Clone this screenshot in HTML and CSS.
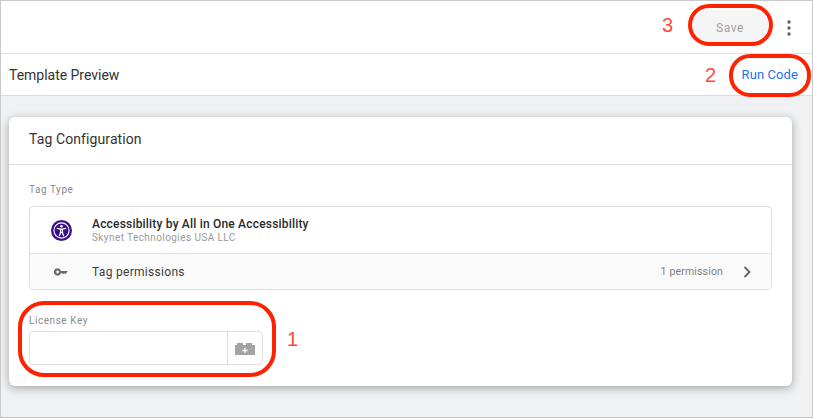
FILE: index.html
```html
<!DOCTYPE html>
<html lang="en">
<head>
<meta charset="utf-8">
<title>Template Preview</title>
<link rel="stylesheet" href="styles.css">
</head>
<body>
<div class="frame">
  <header class="topbar">
    <button class="save">Save</button>
    <svg class="more" width="4" height="16" viewBox="0 0 4 16"><circle cx="2" cy="2" r="1.7"/><circle cx="2" cy="8" r="1.7"/><circle cx="2" cy="14" r="1.7"/></svg>
  </header>
  <div class="subbar">
    <span class="subtitle">Template Preview</span>
    <a class="run">Run Code</a>
  </div>
  <main class="content">
    <section class="card">
      <h2 class="card-title">Tag Configuration</h2>
      <div class="card-body">
        <div class="label">Tag Type</div>
        <div class="tagbox">
          <div class="tagrow">
            <div class="icon-col">
              <svg width="21" height="21" viewBox="0 0 21 21">
                <circle cx="10.5" cy="10.5" r="10.5" fill="#3b0f87"/>
                <circle cx="10.5" cy="10.5" r="7.6" fill="none" stroke="#fff" stroke-width="1.1"/>
                <circle cx="10.5" cy="6.3" r="1.3" fill="#fff"/>
                <path d="M6.3 8.3l3.2.8h2l3.2-.8M9.6 9v3.2l-1.2 3.6M11.4 9v3.2l1.2 3.6M9.6 9.2h1.8v3.4H9.6z" fill="none" stroke="#fff" stroke-width="1.2" stroke-linecap="round" stroke-linejoin="round"/>
              </svg>
            </div>
            <div>
              <div class="tagname">Accessibility by All in One Accessibility</div>
              <div class="vendor">Skynet Technologies USA LLC</div>
            </div>
          </div>
          <div class="permrow">
            <div class="icon-col">
              <svg width="14" height="8" viewBox="0 0 14 8"><path fill="#6b6b6b" d="M3.6 0.2a3.7 3.7 0 1 0 3.4 5h1.3l1 1.1 1-1.1 1 1.1 2.2-2.5v-.8H7A3.7 3.7 0 0 0 3.6.2zm0 2.3a1.4 1.4 0 1 1 0 2.9 1.4 1.4 0 0 1 0-2.9z"/></svg>
            </div>
            <span class="permname">Tag permissions</span>
            <span class="permcount">1 permission</span>
            <svg class="chev" width="8" height="12" viewBox="0 0 8 12"><path d="M1.5 1l5 5-5 5" fill="none" stroke="#616161" stroke-width="1.8"/></svg>
          </div>
        </div>
        <div class="label key-label">License Key</div>
        <div class="keyfield">
          <div class="keyinput"></div>
          <div class="keybtn">
            <svg width="20" height="12" viewBox="0 0 20 12"><path fill="#a3a3a3" d="M2 0h6v2h3V0h6v2h3v10H0V2h2z"/><path stroke="#fff" stroke-width="1.3" d="M10 5v5M7.5 7.5h5"/></svg>
          </div>
        </div>
      </div>
    </section>
  </main>

  <svg class="marks" width="813" height="418" viewBox="0 0 813 418">
    <rect x="690" y="6" width="81" height="38" rx="19" />
    <rect x="731" y="56" width="78" height="39" rx="19" />
    <rect x="20" y="303" width="254" height="72" rx="24" />
  </svg>
  <span class="num num3">3</span>
  <span class="num num2">2</span>
  <span class="num num1">1</span>
</div>
</body>
</html>
```

FILE: styles.css
```css
* { box-sizing: border-box; }
html, body { margin: 0; padding: 0; }
body {
  width: 813px;
  height: 418px;
  overflow: hidden;
  font-family: Roboto, "Liberation Sans", sans-serif;
  background: #fff;
}
.frame {
  position: relative;
  width: 813px;
  height: 418px;
  border: 1px solid #c9c9c9;
  border-bottom-color: #c4c4c4;
  display: flex;
  flex-direction: column;
}
.topbar {
  height: 53px;
  flex: none;
  display: flex;
  align-items: center;
  justify-content: flex-end;
  padding-right: 21px;
  border-bottom: 1px solid #e0e0e0;
  background: #fff;
}
.save {
  width: 78px;
  height: 34px;
  border: 0;
  border-radius: 17px;
  background: #f5f5f5;
  color: #a0a0a0;
  font: 400 12px Roboto, "Liberation Sans", sans-serif;
  letter-spacing: .6px;
  margin-right: 18px;
  padding: 2px 0 0;
}
.more { fill: #5f6368; margin-top: 1px; }
.subbar {
  height: 42px;
  flex: none;
  display: flex;
  align-items: center;
  justify-content: space-between;
  padding: 0 14px 0 8px;
  border-bottom: 1px solid #dcdcdc;
  background: #fff;
}
.subtitle { font-size: 14px; color: #333; letter-spacing: -.02px; }
.run { font-size: 13px; font-weight: 400; color: #1a73e8; letter-spacing: .1px; }
.content {
  flex: 1;
  background: #f0f1f3;
  padding: 21px 20px 0 8px;
}
.card {
  height: 269px;
  background: #fff;
  border-radius: 6px;
  box-shadow: 0 2px 8px rgba(60, 64, 67, .45);
}
.card-title {
  margin: 0;
  height: 48px;
  padding: 0 0 4px 20px;
  display: flex;
  align-items: center;
  font-size: 14px;
  font-weight: 400;
  color: #333;
  letter-spacing: .1px;
  border-bottom: 1px solid #e0e0e0;
}
.card-body { padding: 19px 20px 0; }
.label {
  font-size: 10px;
  line-height: 12px;
  color: #8a8a8a;
  letter-spacing: .55px;
}
.tagbox {
  margin-top: 10px;
  height: 84px;
  border: 1px solid #e0e0e0;
  border-radius: 4px;
  overflow: hidden;
}
.tagrow {
  height: 47px;
  display: flex;
  align-items: center;
  border-bottom: 1px solid #e0e0e0;
}
.icon-col {
  width: 62px;
  flex: none;
  display: flex;
  justify-content: center;
}
.tagname {
  font-size: 12px;
  line-height: 14px;
  font-weight: 500;
  color: #2a2a2a;
  letter-spacing: .19px;
}
.vendor {
  font-size: 10px;
  line-height: 13px;
  color: #9a9a9a;
  letter-spacing: .42px;
}
.permrow {
  height: 35px;
  display: flex;
  align-items: center;
  background: #fafafa;
}
.permname { font-size: 12px; color: #3c3c3c; letter-spacing: .3px; flex: 1; }
.permcount { font-size: 10.5px; color: #808080; letter-spacing: .16px; margin-right: 20px; }
.chev { margin-right: 20px; }
.key-label { margin-top: 25px; }
.keyfield {
  margin-top: 4px;
  width: 234px;
  height: 34px;
  display: flex;
  border: 1px solid #e0e0e0;
  border-radius: 4px;
}
.keyinput { flex: 1; }
.keybtn {
  width: 35px;
  display: flex;
  align-items: center;
  justify-content: center;
  border-left: 1px solid #e0e0e0;
  padding-top: 1px;
}
.marks {
  position: absolute;
  left: -1px;
  top: -1px;
  fill: none;
  stroke: #ff2200;
  stroke-width: 4;
  pointer-events: none;
}
.num {
  position: absolute;
  font-family: "Liberation Sans", sans-serif;
  font-size: 20px;
  line-height: 24px;
  color: #ff4a3d;
}
.num3 { left: 661px; top: 12px; }
.num2 { left: 704px; top: 62px; }
.num1 { left: 286px; top: 326px; }
```
